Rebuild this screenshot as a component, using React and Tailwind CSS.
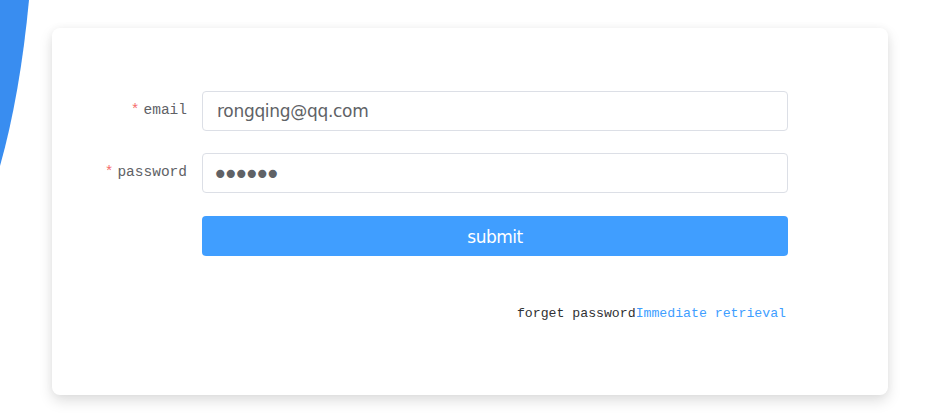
import { useState } from 'react';

export default function App() {
  const [email, setEmail] = useState('rongqing@qq.com');
  const [password, setPassword] = useState('123456');

  return (
    <div className="relative min-h-[417px] w-full overflow-hidden bg-white">
      <svg className="absolute left-0 top-0" width="40" height="180" viewBox="0 0 40 180">
        <path d="M0 0 H29 Q20 95 0 166 Z" fill="#398df0" />
      </svg>

      <div className="relative pl-[52px] pr-[39px] pt-[28px]">
        <div className="h-[367px] rounded-lg bg-white pt-[63px] pl-[50px] pr-[100px] shadow-[0_6px_14px_rgba(0,0,0,0.13),0_0_8px_rgba(0,0,0,0.04)]">
          <form onSubmit={(e) => e.preventDefault()} className="flex flex-col">
            <div className="flex items-center h-10 mb-[22px]">
              <label className="w-[100px] pr-[15px] text-right text-[14.5px] text-[#606266] font-['Liberation_Mono',monospace]">
                <span className="text-[#f56c6c] mr-1">*</span>email
              </label>
              <input
                value={email}
                onChange={(e) => setEmail(e.target.value)}
                className="flex-1 h-10 rounded border border-[#dcdfe6] px-[14px] text-[17px] text-[#606266] outline-none font-['DejaVu_Sans',sans-serif] tracking-[-0.3px]"
              />
            </div>
            <div className="flex items-center h-10 mb-[23px]">
              <label className="w-[100px] pr-[15px] text-right text-[14.5px] text-[#606266] font-['Liberation_Mono',monospace]">
                <span className="text-[#f56c6c] mr-1">*</span>password
              </label>
              <input
                type="password"
                value={password}
                onChange={(e) => setPassword(e.target.value)}
                className="flex-1 h-10 rounded border border-[#dcdfe6] pl-[9px] pr-[14px] pt-[3px] text-[28px] text-[#606266] outline-none font-['DejaVu_Sans',sans-serif] tracking-[-6px]"
              />
            </div>
            <div className="flex ml-[100px]">
              <button
                type="submit"
                className="flex-1 h-10 rounded bg-[#409eff] pt-[3px] text-white text-[17px] font-['DejaVu_Sans',sans-serif] tracking-[-0.5px]"
              >
                submit
              </button>
            </div>
            <div className="mt-[48px] pr-[2px] text-right text-[13.2px] font-['Liberation_Mono',monospace]">
              <span className="text-[#303133]">forget password</span>
              <a href="#" className="text-[#409eff]">Immediate retrieval</a>
            </div>
          </form>
        </div>
      </div>
    </div>
  );
}
